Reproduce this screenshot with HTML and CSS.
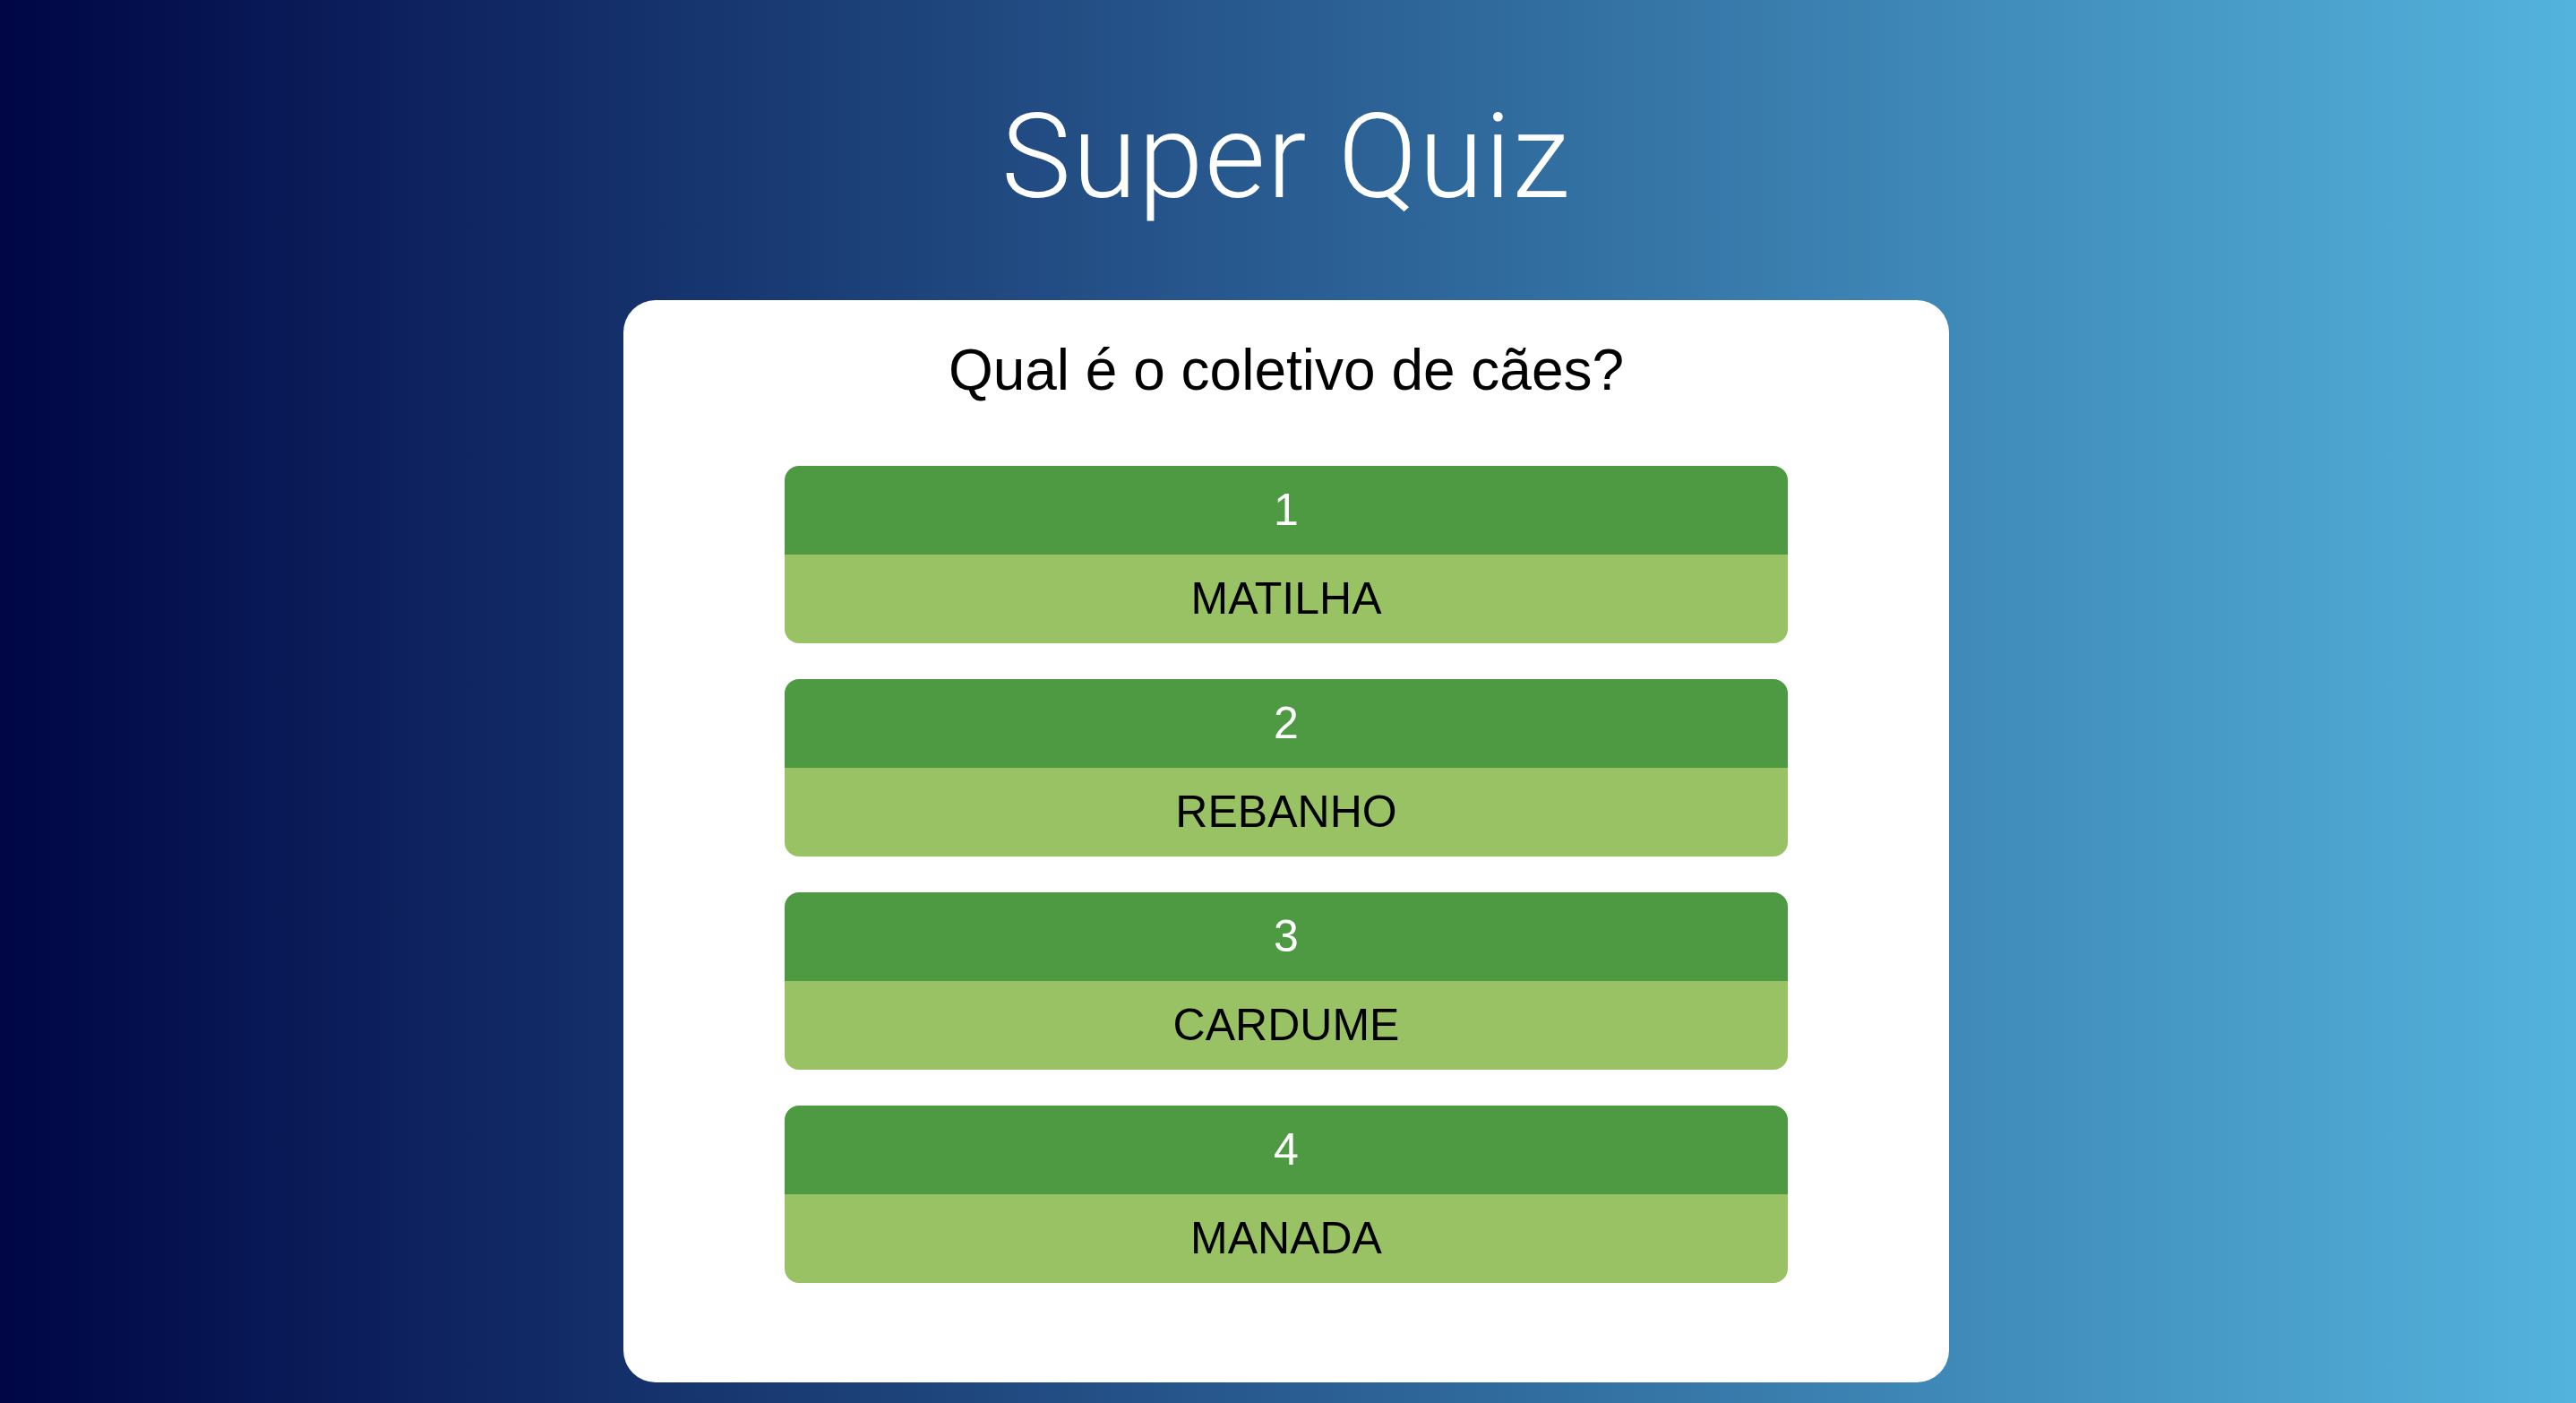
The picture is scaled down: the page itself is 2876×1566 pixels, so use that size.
FILE: index.html
```html
<!DOCTYPE html>
<html lang="pt-BR">
<head>
<meta charset="utf-8">
<title>Super Quiz</title>
<link rel="stylesheet" href="styles.css">
</head>
<body>
  <main class="page">
    <h1 class="title">Super Quiz</h1>
    <section class="card">
      <h2 class="question">Qual é o coletivo de cães?</h2>
      <div class="answers">
        <div class="answer">
          <div class="answer-num">1</div>
          <div class="answer-text">MATILHA</div>
        </div>
        <div class="answer">
          <div class="answer-num">2</div>
          <div class="answer-text">REBANHO</div>
        </div>
        <div class="answer">
          <div class="answer-num">3</div>
          <div class="answer-text">CARDUME</div>
        </div>
        <div class="answer">
          <div class="answer-num">4</div>
          <div class="answer-text">MANADA</div>
        </div>
      </div>
    </section>
  </main>
</body>
</html>
```

FILE: styles.css
```css
html, body {
  margin: 0;
  padding: 0;
}

body {
  min-height: 100vh;
  background: linear-gradient(to right, #000646 0%, #53b3dc 100%);
  font-family: "Liberation Sans", Arial, Helvetica, sans-serif;
}

.page {
  display: flex;
  flex-direction: column;
  align-items: center;
  padding-right: 4px;
  min-height: 1566px;
  box-sizing: border-box;
}

.title {
  margin: 0;
  padding-top: 110px;
  margin-bottom: 95px;
  font-family: Roboto, "Liberation Sans", sans-serif;
  font-weight: 300;
  font-size: 131px;
  line-height: 130px;
  letter-spacing: 1.6px;
  color: #ffffff;
  text-align: center;
}

.card {
  width: 1480px;
  box-sizing: border-box;
  background: #ffffff;
  border-radius: 36px;
  padding: 46px 180px 111px;
  display: flex;
  flex-direction: column;
  align-items: stretch;
}

.question {
  margin: 0 0 75px;
  font-weight: 400;
  font-size: 64px;
  line-height: 64px;
  color: #000000;
  text-align: center;
}

.answers {
  display: flex;
  flex-direction: column;
  gap: 40px;
}

.answer {
  border-radius: 16px;
  overflow: hidden;
  display: flex;
  flex-direction: column;
  text-align: center;
  font-size: 50px;
}

.answer-num {
  height: 99px;
  line-height: 99px;
  background: #4d9a42;
  color: #ffffff;
}

.answer-text {
  height: 99px;
  line-height: 99px;
  background: #99c265;
  color: #000000;
}
```
